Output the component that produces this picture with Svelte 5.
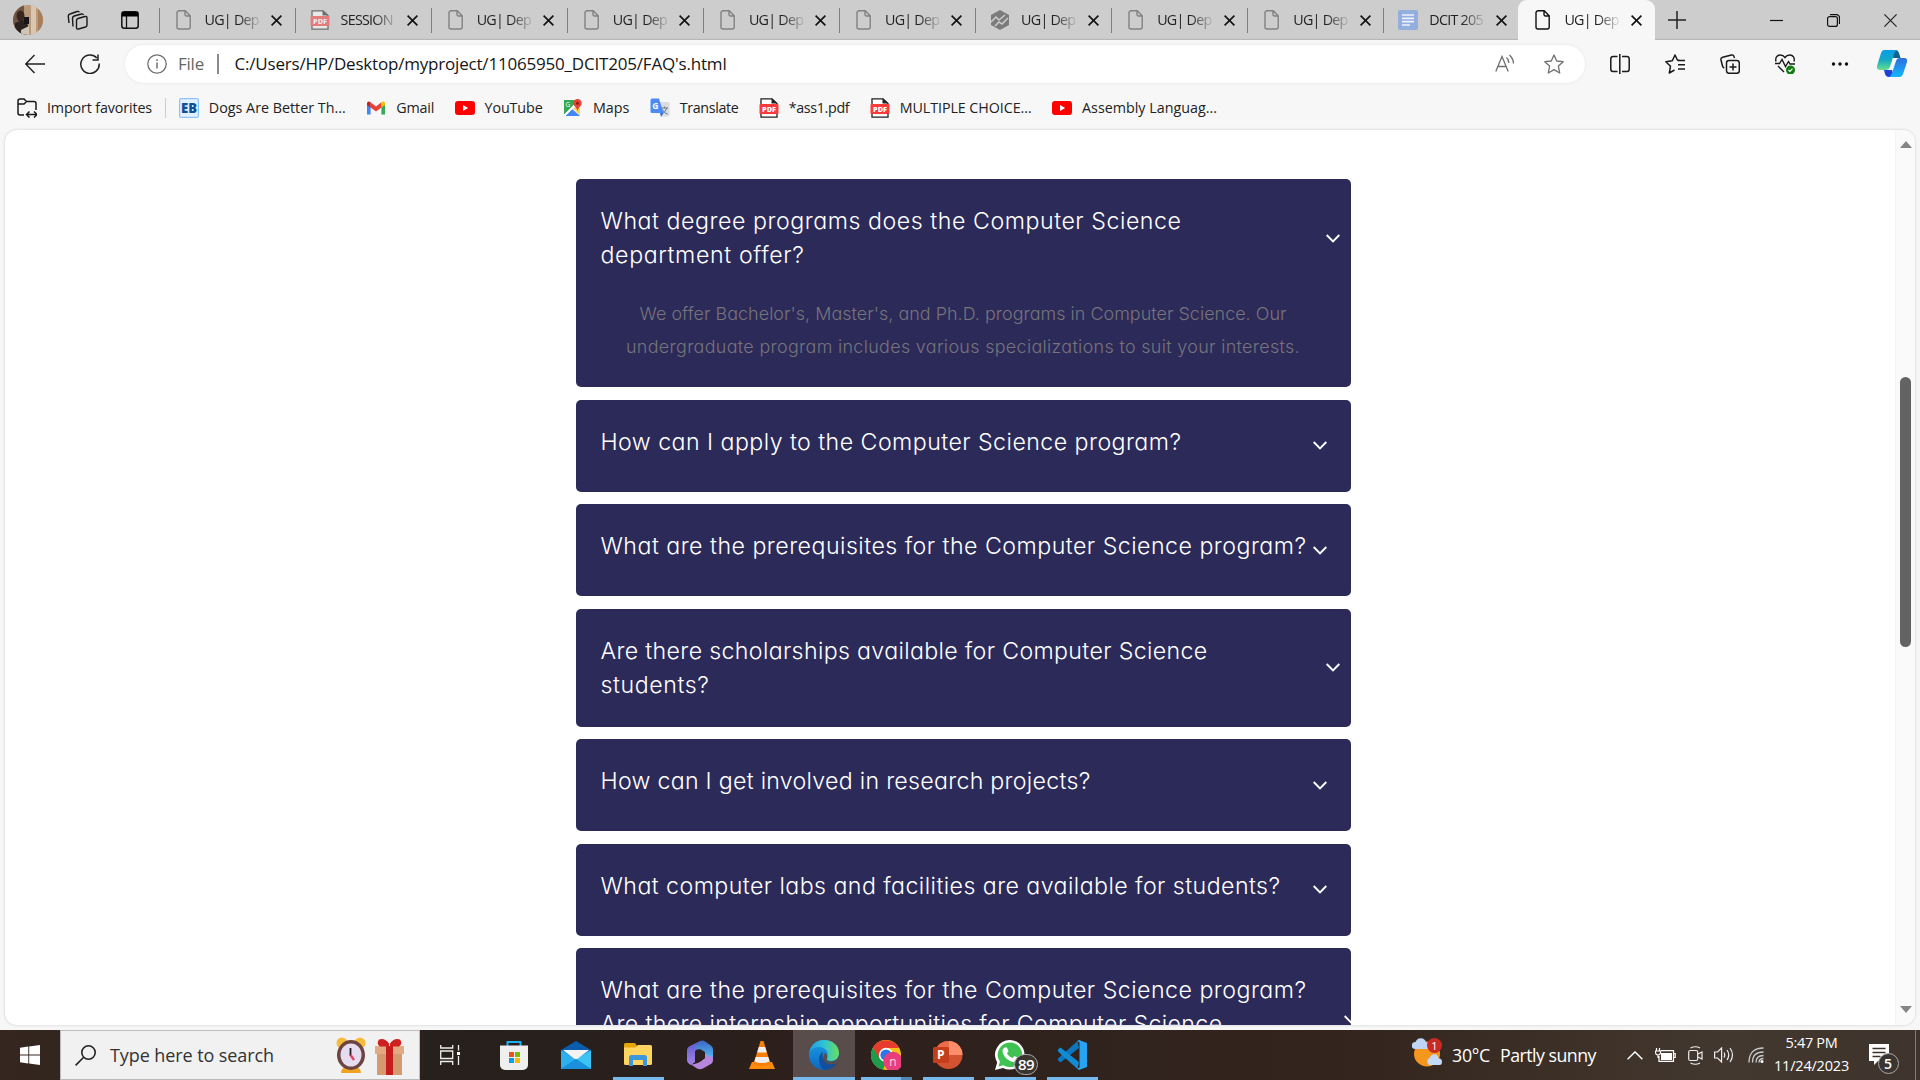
<script>
  const tabs = [
    { title: 'UG| Dep', icon: 'file' },
    { title: 'SESSION', icon: 'pdf' },
    { title: 'UG| Dep', icon: 'file' },
    { title: 'UG| Dep', icon: 'file' },
    { title: 'UG| Dep', icon: 'file' },
    { title: 'UG| Dep', icon: 'file' },
    { title: 'UG| Dep', icon: 'hex' },
    { title: 'UG| Dep', icon: 'file' },
    { title: 'UG| Dep', icon: 'file' },
    { title: 'DCIT 205', icon: 'doc' },
    { title: 'UG| Dep', icon: 'file', active: true }
  ];

  const bookmarks = [
    { label: 'Dogs Are Better Th...', icon: 'eb', width: 137 },
    { label: 'Gmail', icon: 'gmail', width: 38 },
    { label: 'YouTube', icon: 'youtube', width: 58 },
    { label: 'Maps', icon: 'maps', width: 36.5 },
    { label: 'Translate', icon: 'translate', width: 58.5 },
    { label: '*ass1.pdf', icon: 'pdf', width: 60.5 },
    { label: 'MULTIPLE CHOICE...', icon: 'pdf', width: 132 },
    { label: 'Assembly Languag...', icon: 'youtube', width: 135 }
  ];

  const faqs = [
    {
      lines: [
        { text: 'What degree programs does the Computer Science', width: 581 },
        { text: 'department offer?', width: 204 }
      ],
      answer: [
        { text: "We offer Bachelor's, Master's, and Ph.D. programs in Computer Science. Our", width: 647 },
        { text: 'undergraduate program includes various specializations to suit your interests.', width: 674 }
      ]
    },
    { lines: [{ text: 'How can I apply to the Computer Science program?', width: 581 }] },
    { lines: [{ text: 'What are the prerequisites for the Computer Science program?', width: 706 }] },
    {
      lines: [
        { text: 'Are there scholarships available for Computer Science', width: 607 },
        { text: 'students?', width: 109 }
      ]
    },
    { lines: [{ text: 'How can I get involved in research projects?', width: 490 }] },
    { lines: [{ text: 'What computer labs and facilities are available for students?', width: 680 }] },
    {
      lines: [
        { text: 'What are the prerequisites for the Computer Science program?', width: 706 },
        { text: 'Are there internship opportunities for Computer Science', width: 622 }
      ],
      last: true
    }
  ];

  const apps = [
    { icon: 'store' },
    { icon: 'mail' },
    { icon: 'explorer', open: true },
    { icon: 'm365' },
    { icon: 'vlc' },
    { icon: 'edge', open: true, active: true },
    { icon: 'chrome', open: true, stacked: true },
    { icon: 'ppt', open: true },
    { icon: 'whatsapp', open: true, badge: '89' },
    { icon: 'vscode', open: true }
  ];

  // Tracks the letters of a label so that it fills the given width.
  function fit(node, width) {
    const natural = node.getBoundingClientRect().width;
    node.style.letterSpacing = (width - natural) / node.textContent.length + 'px';
  }
</script>

{#snippet icon(name)}
  {#if name === 'file'}
    <svg class="i20" viewBox="0 0 20 20" fill="none" stroke="currentColor" stroke-width="1.4"><path d="M5 .8h6.2l5 5V17a2 2 0 0 1-2 2H5a2 2 0 0 1-2-2V2.800a2 2 0 0 1 2-2zM11 1v3.500a1.500 1.500 0 0 0 1.500 1.500H16" /></svg>
  {:else if name === 'pdf'}
    <svg class="i20" viewBox="0 0 20 20"><path d="M2 .8h11l5 4.700V19.200H2z" fill="#fff" stroke="#222" stroke-width="1.300" /><path d="M12.500 0l6 5.500h-6z" fill="#222" /><rect x="0.500" y="6" width="19" height="10" rx="1" fill="#f93b3b" /><text x="10" y="13.700" text-anchor="middle" font-size="7.300" font-weight="800" fill="#fff">PDF</text></svg>
  {:else if name === 'hex'}
    <svg class="i20" viewBox="0 0 20 20"><path d="M10 0l9 5v10l-9 5-9-5V5z" fill="#7b7b7b" /><path d="M1 12l5-5 3 3 6-5M5 16l4-4 3 2 6-6" fill="none" stroke="#cdcdcd" stroke-width="1.500" /></svg>
  {:else if name === 'doc'}
    <svg class="i20" viewBox="0 0 20 20"><rect width="20" height="20" rx="2" fill="#94aede" /><path d="M4 5h12M4 8.300h12M4 11.700h12M4 15h8" stroke="#edf2fb" stroke-width="1.700" /></svg>
  {:else if name === 'eb'}
    <svg class="i20" viewBox="0 0 20 20"><rect x=".6" y=".6" width="18.800" height="18.800" rx="1.500" fill="#e2f1ff" stroke="#8cc5f5" stroke-width="1.200" /><text x="10" y="15.200" text-anchor="middle" font-size="14" font-weight="800" textLength="16" lengthAdjust="spacingAndGlyphs" fill="#0f4f94">EB</text></svg>
  {:else if name === 'gmail'}
    <svg class="i20" viewBox="0 0 20 20"><path d="M1 5v11.500h3.600V8z" fill="#4285f4" /><path d="M19 5v11.500h-3.600V8z" fill="#34a853" /><path d="M4.600 4.200L10 8.400l5.400-4.200v5.300L10 13.600 4.600 9.500z" fill="#ea4335" /><path d="M1 5.500c0-2 2-2.700 3.600-1.300v5.300L1 7z" fill="#c5221f" /><path d="M19 5.500c0-2-2-2.700-3.600-1.300v5.300L19 7z" fill="#fbbc04" /></svg>
  {:else if name === 'youtube'}
    <svg class="i20" viewBox="0 0 20 20"><rect y="3" width="20" height="14" rx="3" fill="#f00" /><path d="M8 7l5.200 3L8 13z" fill="#fff" /></svg>
  {:else if name === 'maps'}
    <svg class="i20" viewBox="0 0 20 20"><rect x="1" y="2" width="16" height="16" rx="1.500" fill="#e8e8e8" /><path d="M1 2h15L1 17z" fill="#34a853" /><path d="M2 18l7-7 8 7z" fill="#4285f4" /><path d="M1 18L16 3" stroke="#fff" stroke-width="2" /><path d="M10 10l7 7V10z" fill="#ffd34d" /><path d="M14.500 1a4.200 4.200 0 0 1 4.200 4.200c0 3-3.700 4-4.200 8-.5-4-4.200-5-4.200-8A4.200 4.200 0 0 1 14.500 1z" fill="#ea4335" /><circle cx="14.500" cy="5.200" r="1.500" fill="#8c1d18" /><text x="2.500" y="8.500" font-size="6.500" fill="#fff">G</text></svg>
  {:else if name === 'translate'}
    <svg class="i20" viewBox="0 0 20 20"><path d="M8 4h10a1.500 1.500 0 0 1 1.500 1.500V17a1.500 1.500 0 0 1-1.500 1.500h-6z" fill="#dcdcdc" /><path d="M11 10h7M14.500 8.500V10M16.500 10c-.5 3-2.500 4.500-4.500 5.500M12.500 11.500c1 2.500 3 4 5 4.500" stroke="#607d8b" fill="none" /><path d="M2 .5h7L13.500 15H2A1.500 1.500 0 0 1 .5 13.500V2A1.500 1.500 0 0 1 2 .5z" fill="#4c8bf5" /><path d="M10 15h3.500L11 19z" fill="#3367d6" /><text x="2.300" y="11" font-size="8.500" font-weight="700" fill="#fff">G</text></svg>
  {:else if name === 'store'}
    <svg class="i30" viewBox="0 0 30 30"><path d="M8.500 6V2h13v4" fill="none" stroke="#1cb0ee" stroke-width="2" /><path d="M1 5.500h28V25a5 5 0 0 1-5 5H6a5 5 0 0 1-5-5z" fill="#efefef" /><path d="M10 12h5v5h-5z" fill="#f04e1f" /><path d="M16 12h5v5h-5z" fill="#7eba00" /><path d="M10 18h5v5h-5z" fill="#009fe8" /><path d="M16 18h5v5h-5z" fill="#ffb800" /></svg>
  {:else if name === 'mail'}
    <svg class="i30" viewBox="0 0 30 30"><path d="M0 10L15 1l15 9v4H0z" fill="#0a5cad" /><path d="M0 10.500V29h30V10.500z" fill="#1a91dd" /><path d="M30 10.500V29L15 19z" fill="#3cc3f4" /><path d="M0 10.500V29L15 19z" fill="#2cb0ec" /><path d="M0 29l15-10 15 10z" fill="#1a8fdc" /><path d="M2 10h26l-11 8.500q-2 1-4 0z" fill="#f3f3f3" /></svg>
  {:else if name === 'explorer'}
    <svg class="i30" viewBox="0 0 30 30"><path d="M1 4.500A1.500 1.500 0 0 1 2.500 3H12l2 3v5H1z" fill="#e5a50a" /><path d="M1 7.500h11L15 5h12.500A1.500 1.500 0 0 1 29 6.500v17a1.500 1.500 0 0 1-1.500 1.500h-25A1.500 1.500 0 0 1 1 23.500z" fill="#ffd461" /><path d="M6 26V17.500A2.500 2.500 0 0 1 8.500 15h13a2.500 2.500 0 0 1 2.500 2.500V26h-4v-6h-10v6z" fill="#3d97dd" /></svg>
  {:else if name === 'm365'}
    <svg class="i30" viewBox="0 0 30 30"><defs><linearGradient id="mLeft" x2="0" y2="1"><stop stop-color="#5a5bd0" /><stop offset="1" stop-color="#a583e6" /></linearGradient><linearGradient id="mRight" x2="0" y2="1"><stop stop-color="#3a66c4" /><stop offset="1" stop-color="#56c4f5" /></linearGradient></defs><path d="M15 1L4 6.500Q2 8 2 10v10q0 3 4 5l4-3V11l10-7z" fill="url(#mLeft)" /><path d="M15 1q3-1 5 .5l6 4q2 1.500 2 4V20l-9-3v-5L10 8z" fill="url(#mRight)" /><path d="M28 17v3q0 3-3 4.500l-7 4q-3 1.500-6 0l-6-4q7 0 14-6.500l-1-4z" fill="#b686dc" /><path d="M10 12l5-3 5 3v6l-5 3-5-3z" fill="#2b211e" /></svg>
  {:else if name === 'vlc'}
    <svg class="i30" viewBox="0 0 30 30"><path d="M5 22h20l3 7H2z" fill="#ff8c0a" /><path d="M13.500 1h3l7 23q-8.500 4-17 0z" fill="#f57f0a" /><path d="M11.800 7h6.400l1.600 5.500H10.200zM8.700 17h12.600l1.400 4.500q-7.700 3-15.400 0z" fill="#eee" /></svg>
  {:else if name === 'edge'}
    <svg class="i30" viewBox="0 0 30 30"><defs><linearGradient id="edgeTop"><stop stop-color="#1d9be5" /><stop offset=".5" stop-color="#2fc3d6" /><stop offset="1" stop-color="#69e05b" /></linearGradient><linearGradient id="edgeSide" x2="0" y2="1"><stop stop-color="#1b9de2" /><stop offset="1" stop-color="#0c68c4" /></linearGradient></defs><circle cx="15" cy="15" r="15" fill="url(#edgeSide)" /><path d="M0 14C1 5 7 0 15 0c9 0 15 6 15 13 0 5-4 8-8 8-3 0-5.500-1-4.500-3C21 12 16 7 10 7 5 7 1 10 0 14z" fill="url(#edgeTop)" /><path d="M10 19c0-4 2-6 4-7-2 7 3 12 9 12 3 0 4.500-1.500 5-1-3 5-8 7-13 7-3-2-5-7-5-11z" fill="#124f9c" /><path d="M18 18.500c-1 2 1.500 3.500 5 3 4-.5 6-3 7-6l.5 6.500-4 2c-6 1.500-12-1-12-6 0-3 1-4.500 1.500-5 2 1 3 3.500 2 5.500z" fill="#584d4b" /></svg>
  {:else if name === 'chrome'}
    <svg class="i30" viewBox="0 0 30 30"><circle cx="15" cy="15" r="15" fill="#fbc116" /><path d="M2 7.500A15 15 0 0 1 28 8H15v14L8 19z" fill="#e63b2e" /><path d="M2 7.500L9 19l6 3-3 7.800A15 15 0 0 1 2 7.500z" fill="#1e9a4b" /><circle cx="15" cy="15" r="7.200" fill="#fff" /><circle cx="15" cy="15" r="5.600" fill="#2a78e8" /><circle cx="22" cy="21.500" r="9.700" fill="#e83e7b" /><text x="22" y="26" text-anchor="middle" font-size="12" fill="#fbd3e1">n</text></svg>
  {:else if name === 'ppt'}
    <svg class="i30" viewBox="0 0 30 30"><circle cx="15.500" cy="15" r="14" fill="#d35230" /><path d="M15.500 1a14 14 0 0 1 14 14h-14z" fill="#ff8f6b" /><path d="M15.500 1a14 14 0 0 0-14 14h14z" fill="#ed6c47" /><rect y="7" width="16" height="16" rx="1.500" fill="#c43e1c" /><text x="7.700" y="19.300" text-anchor="middle" font-size="12" font-weight="700" fill="#fff">P</text></svg>
  {:else if name === 'whatsapp'}
    <svg class="i30" viewBox="0 0 30 30"><path d="M15 0a14.800 14.800 0 1 1-7 28L0 30l2.200-7.600A14.800 14.800 0 0 1 15 0z" fill="#fff" /><path d="M15 2.500A12.300 12.300 0 1 1 8.500 25.300L3.500 26.500l1.400-4.800A12.300 12.300 0 0 1 15 2.500z" fill="#3fc251" /><path d="M10 7.500l2 0 1.500 3.700-1.500 2c1.500 2.500 3 3.700 5.500 4.800l2-2 3.500 1.700c.3 3-2 4.300-4 4.300-5 0-11.500-6-11.500-11 0-1.500 1-3 2.500-3.500z" fill="#fff" /></svg>
  {:else if name === 'vscode'}
    <svg class="i30" viewBox="0 0 30 30"><path d="M22 8L3.500 22.500 1 20.500v-2L20.500 1z" fill="#0b76bd" /><path d="M22 22L3.500 7.500 1 9.500v2L20.500 29z" fill="#118bd4" /><path d="M22 0l8 3v24l-8 3-2-1.500 2.500-1V2.500L20 1z" fill="#27a3f2" /></svg>
  {/if}
{/snippet}

<div class="screen">
  <header class="tabstrip">
    <div class="lead">
      <svg class="avatar" viewBox="0 0 30 30"><defs><clipPath id="face"><circle cx="15" cy="15" r="15" /></clipPath></defs><g clip-path="url(#face)"><path d="M0 0h30v30H0z" fill="#b99a7c" /><path d="M0 0h11v30H0z" fill="#6e5642" /><path d="M18 0h5v30h-5z" fill="#d9c5b0" /><path d="M25 4h5v22h-5z" fill="#a87d58" /><ellipse cx="7.500" cy="11" rx="4" ry="5.500" fill="#3a261d" /><path d="M2 18l8-3 5 5v10H2z" fill="#2c2220" /><path d="M11 12h5v7h-5z" fill="#15161c" /><path d="M8 25l8-4v9H8z" fill="#cfc5b4" /></g></svg>
      <svg class="spaces" viewBox="0 0 21 20" fill="none" stroke="#1a1a1a" stroke-width="1.400"><path d="M11 8.500l7-2q2-.5 2 1.500v7q0 1.500-1.500 2l-7 2q-2 .5-2-1.500v-7q0-1.600 1.500-2zM6 16.500l-.5-8q0-2 1.700-2.500l7.300-2q1.500-.4 2 1M2 13l-.7-6.500Q1 4.500 3 4l7-2.500q1.800-.5 2.300.7" /></svg>
      <svg class="vtabs" viewBox="0 0 18 18"><rect x=".8" y=".8" width="16.400" height="16.400" rx="2.500" fill="none" stroke="#111" stroke-width="1.500" /><path d="M1 1h16v4.500H1z" /><path d="M5.500 5v12" stroke="#111" stroke-width="1.300" /></svg>
    </div>
    {#each tabs as tab}
      <div class="tab" class:active={tab.active}>
        <span class="favicon" class:dim={tab.icon === 'pdf'}>{@render icon(tab.icon)}</span>
        <span class="title">{tab.title}</span>
        <svg class="x" viewBox="0 0 11 11" stroke="#111" stroke-width="1.600"><path d="M.6.600l9.800 9.800M10.400.600L.6 10.400" /></svg>
      </div>
    {/each}
    <svg class="plus" viewBox="0 0 18 18" stroke="#222" stroke-width="1.500"><path d="M9 0v18M0 9h18" /></svg>
    <div class="window-controls">
      <svg viewBox="0 0 13 13" stroke="#111" stroke-width="1.200"><path d="M0 6.500h13" /></svg>
      <svg viewBox="0 0 13 13" fill="none" stroke="#111" stroke-width="1.200"><rect x=".6" y="2.600" width="9.800" height="9.800" rx="2" /><path d="M3 .700h6.500a3 3 0 0 1 3 3V10" /></svg>
      <svg viewBox="0 0 13 13" stroke="#222" stroke-width="1.200"><path d="M.4.400l12.200 12.200M12.600.400L.4 12.600" /></svg>
    </div>
  </header>

  <div class="toolbar">
    <span class="tool"><svg class="i20" viewBox="0 0 20 20" fill="none" stroke="#222" stroke-width="1.400"><path d="M20 10H1M9.500 1L.8 10l8.700 9" /></svg></span>
    <span class="tool"><svg class="i20" viewBox="0 0 20 20" fill="none" stroke="#222" stroke-width="1.500"><path d="M19.200 9.500A9.200 9.200 0 1 1 16.800 4M18 .5v5.500h-5.500" /></svg></span>
    <div class="address">
      <svg class="i20 muted" viewBox="0 0 20 20" fill="none" stroke="currentColor" stroke-width="1.300"><circle cx="10" cy="10" r="9.200" /><path d="M10 8.500v6M10 5.200v1.700" stroke-width="1.500" /></svg>
      <span class="scheme"><span use:fit={26}>File</span></span>
      <span class="bar"></span>
      <span class="url"><span use:fit={492}>C:/Users/HP/Desktop/myproject/11065950_DCIT205/FAQ's.html</span></span>
      <svg class="i20 muted aloud" viewBox="0 0 20 20" fill="none" stroke="currentColor" stroke-width="1.300"><path d="M.8 17.500L7 2.500l6.200 15M3 12.500h8M11.500 3.500q2.500 2.500 2.300 5.500M14.500 1q4 4 4 8.500" /></svg>
      <svg class="i20 muted" viewBox="0 0 20 20" fill="none" stroke="currentColor" stroke-width="1.300" stroke-linejoin="round"><path d="M10 1l2.700 6 6.500.7-4.800 4.400L15.700 19 10 15.600 4.300 19l1.300-6.900L.8 7.700l6.500-.7z" /></svg>
    </div>
    <span class="tool"><svg class="i20" viewBox="0 0 20 20" fill="none" stroke="#1a1a1a" stroke-width="1.500"><path d="M7.500 2.500H3A2.200 2.200 0 0 0 .8 4.700v10.600A2.200 2.200 0 0 0 3 17.500h4.500M12 2.500h5a2.200 2.200 0 0 1 2.200 2.200v10.600a2.200 2.200 0 0 1-2.200 2.200h-5M9.800 0v20" /></svg></span>
    <span class="tool"><svg class="i20" viewBox="0 0 20 20" fill="none" stroke="#1a1a1a" stroke-width="1.500" stroke-linejoin="round"><path d="M14.500 6.200h-2L10 1 7.300 6.800.8 7.700l4.700 4.500L4.300 19l5.200-3M13 6.500h7M13 10.700h7M13 15h7" /></svg></span>
    <span class="tool"><svg class="i20" viewBox="0 0 20 20" fill="none" stroke="#1a1a1a" stroke-width="1.500"><rect x="6.500" y="6.500" width="12.800" height="12.800" rx="2.500" /><path d="M13 9.500v7M9.500 13h7M14.500 4l-.5-1.500Q13.500.5 11.500 1L2.700 3.200Q.5 3.700 1 6l1.500 6q.3 1.500 1.800 2" /></svg></span>
    <span class="tool"><svg class="i20" viewBox="0 0 20 20" fill="none" stroke="#1a1a1a" stroke-width="1.400"><path d="M1 7.500C0 4 2 1 5 1c2.300 0 4 1 5 2.500C11 2 12.700 1 15 1c3 0 5 3 4 6.500M0 9.500h4.500l2.500-4 3.500 7 3-5 1.500 2.500h5M3 12l6 6" /><circle cx="15.500" cy="16" r="4.500" fill="#107c10" stroke="none" /><path d="M13.500 16l1.500 1.500 2.500-2.800" stroke="#fff" stroke-width="1.200" /></svg></span>
    <span class="tool"><svg class="i20" viewBox="0 0 20 20" fill="#111"><circle cx="3.500" cy="10" r="1.700" /><circle cx="10" cy="10" r="1.700" /><circle cx="16.500" cy="10" r="1.700" /></svg></span>
    <svg class="copilot" viewBox="0 0 30 27"><defs><linearGradient id="coLeft" x2="0" y2="1"><stop stop-color="#0a9ee8" /><stop offset=".5" stop-color="#14a9c4" /><stop offset="1" stop-color="#69e08e" /></linearGradient><linearGradient id="coRight" x2="0" y2="1"><stop stop-color="#2d6fe0" /><stop offset="1" stop-color="#13b5fb" /></linearGradient></defs><path d="M14 0h5q2 0 3 3l1.500 5H16z" fill="#0d6292" /><path d="M7 20h8l2 7h-5q-3 0-4-3z" fill="#1f3fd8" /><path d="M7 0h13q-2 1-3 4l-4 13q-1 3-4 3H3q-4 0-3-4L4 3q1-3 3-3z" fill="url(#coLeft)" /><path d="M23 27H12q2-1 3-4l4-12q1-3 4-3h4q4 0 3 4l-4 12q-1 3-3 3z" fill="url(#coRight)" /></svg>
  </div>

  <nav class="bookmarks">
    <span class="bookmark import"><svg class="i20" viewBox="0 0 20 20" fill="none" stroke="#1a1a1a" stroke-width="1.500"><path d="M7 17H3a2 2 0 0 1-2-2V3a2 2 0 0 1 2-2h4l2.500 2.500H17a2 2 0 0 1 2 2V12M1 6h6l2.500-2.500" /><path d="M10 16.500h9.500M12.500 13.500l-3 3 3 3M17 13.500l3 3-3 3" /></svg><span class="label" style:width="105px"><span use:fit={105}>Import favorites</span></span></span>
    <span class="divider"></span>
    {#each bookmarks as item}
      <span class="bookmark">{@render icon(item.icon)}<span class="label" style:width="{item.width}px"><span use:fit={item.width}>{item.label}</span></span></span>
    {/each}
  </nav>

  <div class="viewport">
    <main class="faq">
      {#each faqs as item}
        <section class="card" class:single={item.lines.length === 1} class:last={item.last}>
          <div class="question">
            <h3>
              {#each item.lines as line}<span class="line"><span use:fit={line.width}>{line.text}</span></span>{/each}
            </h3>
            <svg class="chevron" viewBox="0 0 14 9" fill="none" stroke="#fff" stroke-width="1.900"><path d="M.7 1L7 7.500 13.300 1" /></svg>
          </div>
          {#if item.answer}
            <p>
              {#each item.answer as line}<span class="line"><span use:fit={line.width}>{line.text}</span></span>{/each}
            </p>
          {/if}
        </section>
      {/each}
    </main>
    <div class="scrollbar">
      <svg viewBox="0 0 12 7" fill="#858585"><path d="M6 0l6 7H0z" /></svg>
      <span class="thumb"></span>
      <svg viewBox="0 0 12 7" fill="#858585"><path d="M6 7l6-7H0z" /></svg>
    </div>
  </div>

  <footer class="taskbar">
    <span class="start"><svg class="i20" viewBox="0 0 20 20" fill="#fff"><path d="M0 2.800l8.300-1.200v8H0zM9.200 1.400L20 0v9.600H9.200zM0 10.500h8.300v8L0 17.300zM9.200 10.500H20V20L9.200 18.600z" /></svg></span>
    <div class="search">
      <svg class="lens" viewBox="0 0 21 21" fill="none" stroke="#222" stroke-width="1.600"><circle cx="13.500" cy="7.500" r="6.700" /><path d="M8.700 12.300L.6 20.400" /></svg>
      <span class="hint"><span use:fit={164}>Type here to search</span></span>
      <svg class="alarm" viewBox="0 0 30 36"><path d="M5 36q0-6 7-6h6q7 0 7 6z" fill="#f1a320" /><circle cx="6" cy="6" r="5.500" fill="#f7bb3c" /><circle cx="24" cy="6" r="5.500" fill="#f7bb3c" /><ellipse cx="15" cy="18" rx="14" ry="15" fill="#6d4540" /><ellipse cx="15" cy="18" rx="10.500" ry="11.500" fill="#e5dcf1" /><path d="M14.500 11v8" stroke="#222" stroke-width="1.800" /><path d="M14.500 18l3.500 5" stroke="#e4405f" stroke-width="2.300" /></svg>
      <svg class="gift" viewBox="0 0 29 37"><path d="M2 14h25v23H2z" fill="#d69a71" /><path d="M0 8h29v8H0z" fill="#e3a983" /><path d="M11 8h7v29h-7z" fill="#c51d1d" /><path d="M14 8.500H5Q1 6 4 1.500q6-2 10 4zM15 8.500h9Q28 6 25 1.500q-6-2-10 4z" fill="#cf2020" /></svg>
    </div>
    <span class="taskview"><svg viewBox="0 0 20 20" fill="none" stroke="#eee" stroke-width="1.300"><path d="M.700 0v3h12V0M.700 20v-3.500h12V20M.700 6h12v7.500H.700zM18.500 0v5.500M18.500 11v9" /><path d="M17 7h3v3h-3z" fill="#fff" stroke="none" /></svg></span>
    {#each apps as app}
      <span class="app" class:open={app.open} class:active={app.active} class:stacked={app.stacked}>
        {@render icon(app.icon)}
        {#if app.badge}<span class="badge">{app.badge}</span>{/if}
      </span>
    {/each}
    <div class="weather">
      <svg viewBox="0 0 30 29"><ellipse cx="15" cy="16" rx="13" ry="12.500" fill="#f5961d" /><path d="M3 11a3.500 3.500 0 0 1 .5-7Q5 0 9 .2q4 .3 5 4 4 0 4 3.500T15 11z" fill="#bfd5f6" /><path d="M17 27a4 4 0 0 1 .5-7q2-4.500 5.500-3.700 3 .5 3.500 4Q30 20.500 30 24t-3 3z" fill="#c4d8f8" /><circle cx="22.500" cy="7.500" r="7.500" fill="#cb2a24" /><text x="22.500" y="11.500" text-anchor="middle" font-size="11" fill="#fff">1</text></svg>
      <span class="temp"><span use:fit={38}>30°C</span></span>
      <span class="sky"><span use:fit={96}>Partly sunny</span></span>
    </div>
    <div class="tray">
      <svg class="up" viewBox="0 0 16 9" fill="none" stroke="#fff" stroke-width="1.400"><path d="M.6 8.300L8 .900l7.400 7.400" /></svg>
      <svg class="battery" viewBox="0 0 21 14" fill="none" stroke="#fff" stroke-width="1.200"><path d="M6 2.600h12.500v10.800H4V8M19 5.500h1.200v4H19M1.500 0v3M4.500 0v3M.5 3h5v2q-.5 2-2.500 2T.5 5zM3 7v3" /><path d="M6 5h11v7H6z" fill="#fff" stroke="none" /></svg>
      <svg class="camera" viewBox="0 0 15 19" fill="none" stroke="#eee" stroke-width="1.200"><rect x=".7" y="4.500" width="9" height="10" rx="1.500" /><path d="M10 8l4-2v7l-4-2M2.500 2Q7.500-.5 12 2M2.500 17q5 2.500 9.500 0" /></svg>
      <svg class="sound" viewBox="0 0 21 16" fill="none" stroke="#eee" stroke-width="1.200"><path d="M.6 5h3l4-4v14l-4-4h-3zM10 5.500q1.500 2.500 0 5M13 3q3.500 5 0 10M16 1q5 7 0 14" /></svg>
      <svg class="wifi" viewBox="0 0 16 16" fill="none" stroke="#ccc" stroke-width="1.300"><path d="M1 15.500Q1 1 15.500 1M4.500 15.500Q4.500 5 15.500 5M8 15.500Q8 8.500 15.500 8.500M11 15.500q0-4 4.500-4" /><circle cx="14" cy="14.500" r="1.500" fill="#fff" stroke="none" /></svg>
      <div class="clock">
        <span class="line"><span use:fit={52}>5:47 PM</span></span>
        <span class="line"><span use:fit={75}>11/24/2023</span></span>
      </div>
      <span class="notes"><svg viewBox="0 0 20 21"><path d="M0 0h20v17H9l-4 4v-4H0z" fill="#fff" /><path d="M3.500 4.500h13M3.500 8.500h13M3.500 12.500h8" stroke="#3c322c" stroke-width="1.300" /></svg><span class="badge">5</span></span>
    </div>
    <span class="desktop"></span>
  </footer>
</div>

<style>
  :global(body) { margin: 0; overflow: hidden; }
  .screen { width: 1920px; height: 1080px; display: flex; flex-direction: column; background: #f7f7f7; overflow: hidden; font-family: 'Open Sans', 'Noto Sans', sans-serif; font-size: 14.300px; color: #1b1b1b; }
  svg { display: block; flex: none; }
  .screen span { white-space: nowrap; }
  .i20 { width: 20px; height: 20px; }
  .i30 { width: 30px; height: 30px; }
  .muted { color: #707070; }
  .line { display: block; }

  .tabstrip { height: 40px; flex: none; display: flex; align-items: center; background: #cdcdcd; box-shadow: inset 0 -2px 1px -1px #b5b5b5; }
  .lead { width: 158.500px; box-sizing: border-box; padding-left: 13px; display: flex; align-items: center; flex: none; }
  .avatar { width: 30px; height: 30px; }
  .spaces { width: 21px; height: 20px; margin-left: 24px; }
  .vtabs { width: 18px; height: 18px; margin-left: 33px; }
  .tab { width: 136.100px; height: 25px; flex: none; box-sizing: border-box; border-left: 1.300px solid #7d7d7d; padding-left: 14px; display: flex; align-items: center; }
  .favicon { color: #828282; }
  .dim { opacity: .55; }
  .title { width: 55px; margin-left: 11px; padding-bottom: 1px; overflow: hidden; letter-spacing: -.75px; color: #222; mask-image: linear-gradient(90deg, #000 60%, transparent 105%); }
  .x { width: 11px; height: 11px; margin-left: 11.500px; }
  .tab.active { height: 40px; border-left: 0; padding-left: 15px; margin-left: -1px; border-radius: 9px 9px 0 0; background: #f7f7f7; }
  .active .favicon { color: #111; }
  .plus { width: 18px; height: 18px; margin-left: 13px; }
  .window-controls { margin-left: auto; padding-right: 23px; display: flex; gap: 44px; }
  .window-controls svg { width: 13px; height: 13px; }

  .toolbar { height: 47px; flex: none; display: flex; align-items: center; padding-left: 7.500px; }
  .tool { width: 55px; display: flex; justify-content: center; flex: none; }
  .address { width: 1460px; height: 38px; margin: 0 7px 0 7.500px; box-sizing: border-box; padding: 0 21.500px 0 22px; border-radius: 19px; background: #fff; box-shadow: 0 0 3px #e4e4e4; display: flex; align-items: center; font-size: 17px; flex: none; }
  .scheme { width: 26px; margin-left: 11px; color: #666; }
  .bar { width: 1.500px; height: 20px; margin: 0 16px 0 13px; background: #8a8a8a; }
  .url { color: #161616; }
  .aloud { margin: 0 29px 0 auto; }
  .copilot { width: 30px; height: 27px; margin-left: 10px; }

  .bookmarks { height: 43px; flex: none; box-sizing: border-box; display: flex; align-items: center; padding: 0 0 2px 17px; gap: 20.400px; }
  .bookmark { display: flex; align-items: center; gap: 10px; color: #222; }
  .divider { width: 1px; height: 20px; margin: 0 -8px 0 -7px; background: #ccc; }

  .viewport { height: 895px; margin: 0 5px; flex: none; display: flex; justify-content: flex-end; background: #fff; border-radius: 12px; overflow: hidden; box-shadow: 0 0 3px #c8c8c8; }
  .faq { width: 775px; padding-top: 49px; margin-right: 544px; display: flex; flex-direction: column; gap: 12.500px; flex: none; }
  .card { min-height: 118px; flex: none; box-sizing: border-box; padding: 25px 11px 0 25px; background: #2c2a59; border-radius: 5px; color: #fff; font-family: Inter, 'Open Sans', sans-serif; font-weight: 300; font-feature-settings: 'cv11'; }
  .card.single { min-height: 92px; padding-right: 24px; }
  .card:first-child { min-height: 208px; }
  .question { display: flex; justify-content: space-between; align-items: center; }
  h3 { margin: 0; font-size: 23.200px; font-weight: 300; line-height: 34px; }
  .chevron { width: 14px; height: 9px; }
  .single .chevron { margin: 8px 0 0 -20px; }
  .last { margin-bottom: -60px; padding-right: 0; }
  .last .chevron { margin: 24px -7px 0 0; }
  p { margin: 25px 14px 0 0; font-size: 17.900px; line-height: 33px; color: #77747b; text-align: center; }
  .scrollbar { width: 20.500px; box-sizing: border-box; padding: 11px 0 12px 4px; background: #fafafa; border-left: 1px solid #f4f4f4; display: flex; flex-direction: column; align-items: flex-start; flex: none; }
  .scrollbar svg { width: 12px; height: 7px; }
  .thumb { width: 11px; height: 270px; margin: 229px 0 auto; border-radius: 6px; background: #636363; }

  .taskbar { height: 50px; margin-top: 5px; flex: none; display: flex; background: linear-gradient(90deg, #35271f 0, #26201d 25%, #2d1f1c 43%, #33251d 70%, #43382f 90%, #3e342d 100%); color: #fff; }
  .start { width: 60px; display: flex; align-items: center; justify-content: center; flex: none; }
  .search { width: 360px; box-sizing: border-box; border: 1px solid #bbb; background: #f1f1f1; display: flex; align-items: center; padding-left: 14px; flex: none; color: #333; }
  .lens { width: 21px; height: 21px; }
  .hint { width: 226px; margin-left: 14px; font-size: 18px; }
  .alarm { width: 30px; height: 36px; }
  .gift { width: 29px; height: 37px; margin: 3px 0 0 9px; }
  .taskview { width: 63px; box-sizing: border-box; padding: 15px 0 0 20px; flex: none; }
  .taskview svg { width: 20px; height: 20px; }
  .app { width: 62px; box-sizing: border-box; height: 50px; padding: 0 16px 0; display: flex; align-items: center; flex: none; position: relative; }
  .app.open { background: linear-gradient(#76b9ed, #76b9ed) 50% 100% / 51px 3px no-repeat; }
  .app.active { background: linear-gradient(#76b9ed, #76b9ed) 50% 100% / 100% 3px no-repeat, #584d4b; }
  .app.stacked { background: linear-gradient(90deg, #76b9ed 40px, #5288b4 40px) 50% 100% / 51px 3px no-repeat; }
  .badge { position: absolute; box-sizing: border-box; border: 1px solid #aaa; border-radius: 12px; background: #3b3532; color: #fff; text-align: center; font-weight: 600; }
  .app .badge { right: 3px; bottom: 5px; width: 24px; height: 21px; font-size: 15px; line-height: 19px; letter-spacing: -.5px; }
  .weather { display: flex; align-items: center; margin-left: auto; font-size: 17.800px; }
  .weather svg { width: 30px; height: 29px; margin: -5px 10px 0 0; }
  .temp { width: 38px; margin-right: 10px; }
  .sky { width: 96px; margin-right: 30.500px; }
  .tray { display: flex; align-items: center; width: 288.500px; flex: none; }
  .up { width: 16px; height: 9px; }
  .battery { width: 21px; height: 14px; margin-left: 12px; }
  .camera { width: 15px; height: 19px; margin-left: 12px; }
  .sound { width: 21px; height: 16px; margin-left: 11px; }
  .wifi { width: 16px; height: 16px; margin-left: 13px; }
  .clock { width: 75px; margin: -2px 0 0 10.500px; text-align: center; line-height: 23px; font-size: 14.500px; }
  .notes { position: relative; margin: -1px 0 0 19.500px; }
  .notes svg { width: 20px; height: 21px; }
  .notes .badge { left: 9px; top: 9px; width: 21px; height: 21px; font-size: 14px; line-height: 19px; }
  .desktop { width: 5px; box-sizing: border-box; border-left: 1px solid #857d77; }
</style>
